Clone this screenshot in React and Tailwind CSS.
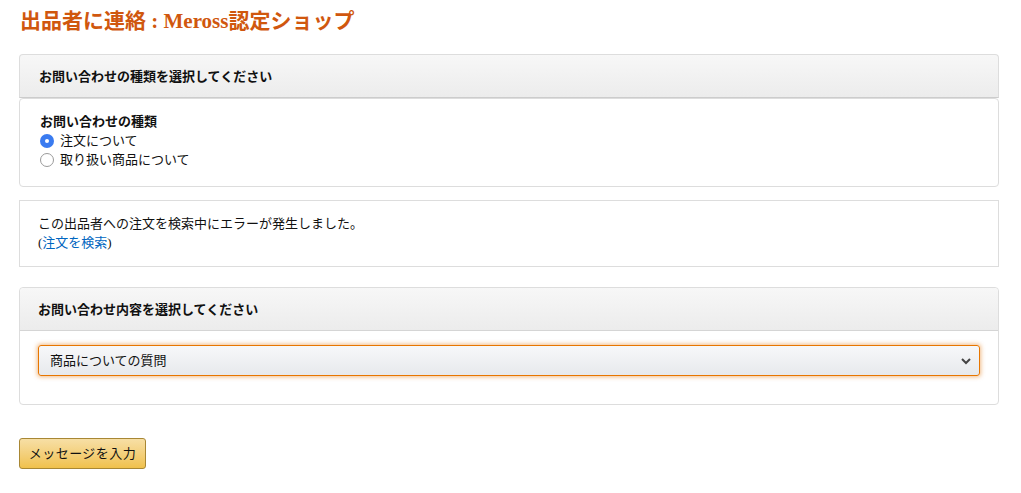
import React, { useState } from "react";

const font = { fontFamily: '"Liberation Serif", "Noto Sans CJK JP", serif' };

const Radio = ({ checked, label, onClick }) => (
  <label className="flex items-center gap-[6px] h-[19px] cursor-pointer" onClick={onClick}>
    {checked ? (
      <span className="w-[14px] h-[14px] rounded-full bg-[#3a7bf0] flex items-center justify-center">
        <span className="w-[4px] h-[4px] rounded-full bg-white" />
      </span>
    ) : (
      <span className="w-[14px] h-[14px] rounded-full border border-[#9a9a9a] bg-white" />
    )}
    <span>{label}</span>
  </label>
);

const App = () => {
  const [kind, setKind] = useState(0);

  return (
    <div className="bg-white min-h-[493px] px-[19px] pt-[6px] text-[13px] text-[#111] leading-[19px]" style={font}>
      <h1 className="text-[21px] font-bold text-[#d0570e] leading-[30px] ml-[1px]">
        出品者に連絡 : Meross認定ショップ
      </h1>

      {/* 種類 */}
      <div className="mt-[18px] w-[980px]">
        <div className="h-[44px] flex items-center px-[19px] rounded-t-[4px] border border-[#ddd] border-b-[#ccc] bg-gradient-to-b from-[#f7f7f7] to-[#ececec] font-bold">
          お問い合わせの種類を選択してください
        </div>
        <div className="border border-[#ddd] rounded-[4px] px-[20px] pt-[13px] pb-[17px]">
          <div className="font-bold">お問い合わせの種類</div>
          <Radio checked={kind === 0} label="注文について" onClick={() => setKind(0)} />
          <Radio checked={kind === 1} label="取り扱い商品について" onClick={() => setKind(1)} />
        </div>
      </div>

      {/* エラー */}
      <div className="mt-[13px] w-[980px] border border-[#ddd] px-[18px] pt-[13px] pb-[14px]">
        <div>この出品者への注文を検索中にエラーが発生しました。</div>
        <div>
          (<a href="#" className="text-[#0066c0]">注文を検索</a>)
        </div>
      </div>

      {/* 内容 */}
      <div className="mt-[20px] w-[980px] border border-[#ddd] rounded-[4px]">
        <div className="h-[43px] flex items-center px-[18px] rounded-t-[4px] border-b border-[#d5d5d5] bg-gradient-to-b from-[#f7f7f7] to-[#ececec] font-bold">
          お問い合わせ内容を選択してください
        </div>
        <div className="px-[18px] pt-[14px] pb-[28px]">
          <div className="h-[31px] flex items-center justify-between pl-[11px] pr-[7px] rounded-[3px] border border-[#e77600] shadow-[0_0_4px_1px_rgba(228,121,17,0.5)] bg-gradient-to-b from-[#f7f8fa] to-[#e7e9ec]">
            <span>商品についての質問</span>
            <svg width="12" height="12" viewBox="0 0 12 12">
              <path d="M2 4l4 4 4-4" fill="none" stroke="#444" strokeWidth="2" />
            </svg>
          </div>
        </div>
      </div>

      <button className="mt-[33px] h-[31px] w-[127px] rounded-[3px] border border-[#a88734] bg-gradient-to-b from-[#f7dfa5] to-[#f0c14b] text-[13px] text-[#111] tracking-[0.5px]" style={font}>
        メッセージを入力
      </button>
    </div>
  );
};

export default App;
